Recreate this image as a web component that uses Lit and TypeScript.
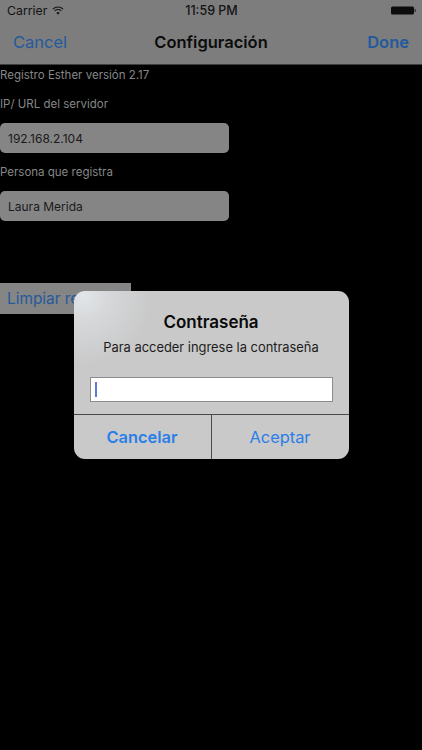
import { LitElement, css, html } from "lit";
import { customElement } from "lit/decorators.js";

@customElement("app-root")
export class AppRoot extends LitElement {
  static styles = css`
    :host {
      display: block;
      width: 422px;
      height: 750px;
      background: #000;
      font-family: Inter, "Liberation Sans", Arial, sans-serif;
      overflow: hidden;
      position: relative;
    }

    /* top bars */
    .status {
      height: 21px;
      background: #7d7d7d;
      display: grid;
      grid-template-columns: 1fr auto 1fr;
      align-items: center;
      padding: 0 6px 0 7px;
      font-size: 12.3px;
      color: #141414;
    }
    .status-left {
      display: flex;
      align-items: center;
      gap: 5px;
    }
    .status-right {
      display: flex;
      justify-content: flex-end;
    }
    .time {
      font-weight: 500;
      font-size: 12.5px;
    }
    .nav {
      height: 44px;
      background: #7d7d7d;
      border-bottom: 1px solid #3e3e3e;
      display: grid;
      grid-template-columns: 1fr auto 1fr;
      align-items: center;
      padding: 0 13px 1px;
      box-sizing: border-box;
      font-size: 16.5px;
      color: #245a9c;
    }
    .title {
      font-weight: 600;
      font-size: 16.5px;
      color: #0c0c0c;
    }
    .done {
      text-align: right;
      font-weight: 600;
    }

    /* form */
    .form {
      display: flex;
      flex-direction: column;
      align-items: flex-start;
      padding-top: 3px;
      font-size: 11.5px;
      color: #878787;
    }
    .label {
      height: 14px;
      line-height: 14px;
    }
    .version {
      margin-bottom: 15px;
    }
    .field {
      box-sizing: border-box;
      width: 229px;
      height: 30px;
      margin: 12px 0 12px;
      padding-left: 8px;
      display: flex;
      align-items: center;
      background: #858585;
      border-radius: 5px;
      font-size: 12px;
      color: #1a1a1a;
    }
    .clear {
      box-sizing: border-box;
      width: 131px;
      height: 31px;
      margin-top: 50px;
      padding-left: 7px;
      display: flex;
      align-items: center;
      background: #858585;
      color: #245a9c;
      font-size: 15.4px;
      white-space: nowrap;
    }

    /* alert */
    .alert {
      position: absolute;
      left: 73.5px;
      top: 291px;
      width: 275px;
      height: 168px;
      box-sizing: border-box;
      border-radius: 11px;
      overflow: hidden;
      background:
        radial-gradient(circle at 8px 4px, #e3e6e9 0, #d6d8da 26px, rgba(201, 201, 201, 0) 70px),
        #c9c9c9;
      display: flex;
      flex-direction: column;
    }
    .alert-title {
      margin-top: 20px;
      height: 22px;
      line-height: 22px;
      text-align: center;
      font-size: 17px;
      font-weight: 600;
      color: #0a0a0a;
    }
    .alert-text {
      margin-top: 7px;
      height: 16px;
      line-height: 16px;
      text-align: center;
      font-size: 12.9px;
      color: #1c1c1c;
    }
    .input {
      box-sizing: border-box;
      margin: 20.5px 16px 0;
      height: 25.5px;
      background: #fff;
      border: 1px solid #8c8c8c;
      display: flex;
      align-items: center;
      padding-left: 4px;
    }
    .caret {
      width: 2px;
      height: 15px;
      background: #5f78e0;
    }
    .buttons {
      margin-top: 12px;
      flex: 1;
      display: grid;
      grid-template-columns: 138px 1fr;
      border-top: 1px solid #4a4a4a;
      font-size: 16.4px;
      color: #2a7ee8;
    }
    .buttons div {
      display: flex;
      align-items: center;
      justify-content: center;
    }
    .cancel {
      font-weight: 600;
      border-right: 1px solid #4a4a4a;
    }
  `;

  render() {
    return html`
      <div class="status">
        <div class="status-left">
          <span>Carrier</span>
          <svg width="12" height="9" viewBox="0 0 13 10">
            <path d="M0.8 3.4a8.2 8.2 0 0 1 11.4 0" fill="none" stroke="#141414" stroke-width="1.3" />
            <path d="M2.9 5.5a5.2 5.2 0 0 1 7.2 0" fill="none" stroke="#141414" stroke-width="1.3" />
            <path d="M6.5 9.6 4.6 7.5a2.8 2.8 0 0 1 3.8 0z" fill="#141414" />
          </svg>
        </div>
        <span class="time">11:59 PM</span>
        <div class="status-right">
          <svg width="25" height="9" viewBox="0 0 25 9">
            <rect x="0" y="0.5" width="23" height="8" rx="1.5" fill="#0c0c0c" />
            <rect x="23.6" y="3" width="1.2" height="3" fill="#333" />
          </svg>
        </div>
      </div>
      <div class="nav">
        <span>Cancel</span>
        <span class="title">Configuración</span>
        <span class="done">Done</span>
      </div>
      <div class="form">
        <div class="label version">Registro Esther versión 2.17</div>
        <div class="label">IP/ URL del servidor</div>
        <div class="field">192.168.2.104</div>
        <div class="label">Persona que registra</div>
        <div class="field">Laura Merida</div>
        <div class="clear">Limpiar registros</div>
      </div>
      <div class="alert">
        <div class="alert-title">Contraseña</div>
        <div class="alert-text">Para acceder ingrese la contraseña</div>
        <div class="input"><div class="caret"></div></div>
        <div class="buttons">
          <div class="cancel">Cancelar</div>
          <div>Aceptar</div>
        </div>
      </div>
    `;
  }
}
